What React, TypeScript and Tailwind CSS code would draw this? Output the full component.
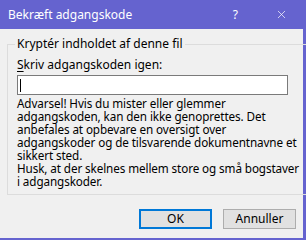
import { X } from "lucide-react";

const font = { fontFamily: '"Noto Sans", "Segoe UI", sans-serif' };

export default function App() {
  return (
    <div className="flex h-[240px] w-[306px] flex-col bg-[#6563cf] text-[12px] text-black" style={font}>
      <div className="flex h-[29px] shrink-0 items-center pl-[8px] text-white">
        <span className="leading-none">Bekræft adgangskode</span>
        <span className="ml-auto mr-[37px] leading-none">?</span>
        <X className="mr-[18px] h-[13px] w-[13px]" strokeWidth={1.3} />
      </div>
      <div className="flex h-[209px] w-[303px] flex-col bg-[#f0f0f0] px-[7px] pt-[8px]">
        <fieldset className="h-[158px] border border-[#dcdcdc] pl-[9px] pr-[9px]">
          <legend className="ml-[-2px] px-[2px] leading-[14px]">Kryptér indholdet af denne fil</legend>
          <label className="mt-[7px] block leading-[14px]">
            <span className="underline underline-offset-2">S</span>kriv adgangskoden igen:
          </label>
          <div className="mt-[3px] flex h-[20px] w-[271px] items-center border border-[#7a7a7a] bg-white pl-[2px]">
            <span className="h-[13px] w-px bg-black" />
          </div>
          <p className="mt-[2px] whitespace-nowrap text-[11.7px] leading-[13px] tracking-[-0.1px]">
            Advarsel! Hvis du mister eller glemmer
            <br />
            adgangskoden, kan den ikke genoprettes. Det
            <br />
            anbefales at opbevare en oversigt over
            <br />
            adgangskoder og de tilsvarende dokumentnavne et
            <br />
            sikkert sted.
            <br />
            Husk, at der skelnes mellem store og små bogstaver
            <br />
            i adgangskoder.
          </p>
        </fieldset>
        <div className="mt-[14px] flex justify-end gap-[11px]">
          <button className="h-[20px] w-[73px] border-2 border-[#0078d7] bg-[#e1e1e1] leading-none">OK</button>
          <button className="h-[20px] w-[73px] border border-[#adadad] bg-[#e1e1e1] leading-none">Annuller</button>
        </div>
      </div>
    </div>
  );
}
